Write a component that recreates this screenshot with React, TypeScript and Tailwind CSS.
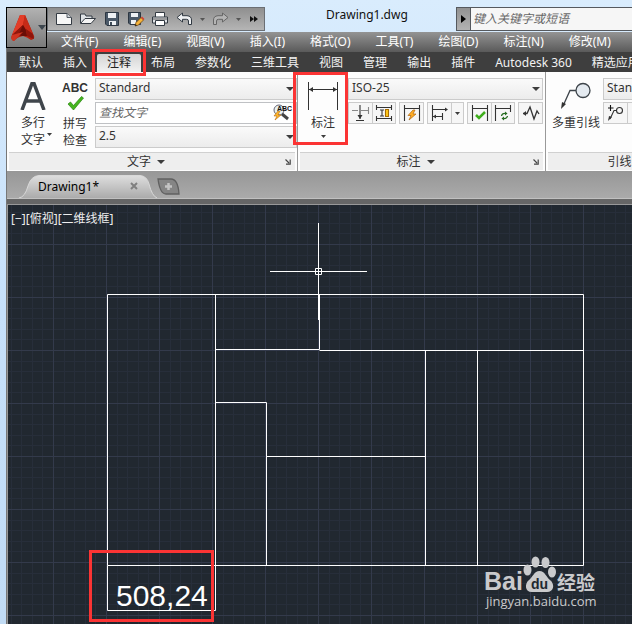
import React from "react";
import type { ReactNode } from "react";

const MENUS = ["文件(F)", "编辑(E)", "视图(V)", "插入(I)", "格式(O)", "工具(T)", "绘图(D)", "标注(N)", "修改(M)"];

const TABS = ["默认", "插入", "注释", "布局", "参数化", "三维工具", "视图", "管理", "输出", "插件", "Autodesk 360", "精选应用"];

function Caret({ className = "" }: { className?: string }) {
  return (
    <svg className={className} width="8" height="4" viewBox="0 0 8 4" aria-hidden="true">
      <path d="M0 0H8L4 4Z" fill="#3c3c3c" />
    </svg>
  );
}

function SmallCaret({ fill = "#3c3c3c" }: { fill?: string }) {
  return (
    <svg width="5" height="3" viewBox="0 0 5 3" aria-hidden="true">
      <path d="M0 0H5L2.5 3Z" fill={fill} />
    </svg>
  );
}

function Launcher() {
  return (
    <button type="button" aria-label="对话框" className="absolute right-1 top-1.5">
      <svg width="6" height="6" viewBox="0 0 6 6" aria-hidden="true">
        <path d="M0.5 0.5L4 4M5.2 0.5V5.2H1" fill="none" stroke="#444" strokeWidth="1.2" />
      </svg>
    </button>
  );
}

function Combo({ label, value, className = "" }: { label: string; value: string; className?: string }) {
  return (
    <div className={`relative h-[22px] ${className}`}>
      <select
        aria-label={label}
        className="block h-full w-full appearance-none border border-[#cbcbcb] bg-linear-to-b from-[#fafafa] to-[#ececec] pb-0.5 pl-[3px] pr-4 text-xs text-[#333]"
      >
        <option>{value}</option>
      </select>
      <Caret className="pointer-events-none absolute right-[3px] top-[9px]" />
    </div>
  );
}

function Panel({ title, width, children, plain }: { title: string; width: string; children: ReactNode; plain?: boolean }) {
  return (
    <section className={`flex shrink-0 flex-col border-r border-[#999] bg-[#fdfdfd] ${width}`}>
      <div className="flex h-20 pt-1.5">{children}</div>
      <div className={`relative mx-0.5 mb-px flex h-[18px] items-center justify-center gap-1.5 border-t border-[#d0d0d0] bg-[#eeeeee] text-xs text-[#333] ${plain ? "" : "pr-3"}`}>
        {title}
        {!plain && <Caret />}
        {!plain && <Launcher />}
      </div>
    </section>
  );
}

function ToolButton({ label, children, width = "w-[23px]" }: { label: string; children: ReactNode; width?: string }) {
  return (
    <button
      type="button"
      aria-label={label}
      className={`flex h-[22px] items-center justify-center border-l border-[#cbcbcb] first:border-l-0 ${width}`}
    >
      {children}
    </button>
  );
}

function ToolGroup({ children }: { children: ReactNode }) {
  return <div className="flex h-[22px] items-center overflow-hidden border border-[#cbcbcb] bg-[#f6f6f6]">{children}</div>;
}

function ToolIcon({ children }: { children: ReactNode }) {
  return (
    <svg width="18" height="16" viewBox="0 0 18 16" fill="none" stroke="#333" strokeWidth="1.1" aria-hidden="true">
      {children}
    </svg>
  );
}

function QuickAccess() {
  const button = "flex h-5 w-6 items-center justify-center";
  return (
    <div className="flex h-6 w-[218px] shrink-0 items-center border border-[#6b6f74] bg-linear-to-b from-[#8f8f8f] to-[#b5b5b5] pl-1">
      <button type="button" aria-label="新建" className={button}>
        <svg width="18" height="14" viewBox="0 0 18 14">
          <path d="M1.5 1.5H12L16.5 5.5V12.5H1.5Z" fill="#f7f7f7" stroke="#333a42" />
          <path d="M12 1.5V5.5H16.5" fill="#d0d4d8" stroke="#555d66" />
        </svg>
      </button>
      <button type="button" aria-label="打开" className={button}>
        <svg width="18" height="14" viewBox="0 0 18 14">
          <path d="M1.5 11V2H6L7 4H13V6.5" fill="#dfe3e6" stroke="#333a42" />
          <path d="M1.5 11.5L6 6.5H16.5L12 11.5Z" fill="#f4f4f4" stroke="#333a42" />
        </svg>
      </button>
      <button type="button" aria-label="保存" className={button}>
        <svg width="16" height="16" viewBox="0 0 16 16">
          <path d="M1.5 1.5H14.5V14.5H3L1.5 13Z" fill="#4b5968" stroke="#2d3742" />
          <path d="M4 2H12V7H4ZM5 10H12V14H5Z" fill="#eef1f4" />
          <path d="M6 11H8V14H6Z" fill="#3d4a57" />
        </svg>
      </button>
      <button type="button" aria-label="另存为" className={button}>
        <svg width="18" height="16" viewBox="0 0 18 16">
          <path d="M1.5 1.5H13.5V13.5H3L1.5 12Z" fill="#4b5968" stroke="#2d3742" />
          <path d="M4 2H11V6H4ZM4 9H9V13H4Z" fill="#eef1f4" />
          <path d="M8 15L9 11.5L14 6.5L16.5 9L11.5 14Z" fill="#f6b33a" stroke="#704713" strokeWidth="0.8" />
          <path d="M14 6.5L16.5 9L17.5 8L15 5.5Z" fill="#d83c31" />
          <path d="M8 15L8.6 13L10 14.4Z" fill="#222" />
        </svg>
      </button>
      <button type="button" aria-label="打印" className={button}>
        <svg width="18" height="16" viewBox="0 0 18 16">
          <path d="M4.5 6V1.5H13.5V6" fill="#fff" stroke="#333a42" />
          <path d="M1.5 6H16.5V12H1.5Z" fill="#e2e4e7" stroke="#333a42" />
          <path d="M4.5 9.5H13.5V14.5H4.5Z" fill="#fff" stroke="#333a42" />
          <path d="M2 8H16" stroke="#555" />
        </svg>
      </button>
      <button type="button" aria-label="放弃" className={button}>
        <svg width="17" height="14" viewBox="0 0 17 14">
          <path d="M1 5.5L6.5 1V3.7H11Q15.5 4 15.5 8V12.5H12.5V9Q12.5 7.3 10.5 7.3H6.5V10Z" fill="#eef0f2" stroke="#303942" />
        </svg>
      </button>
      <button type="button" aria-label="放弃列表" className="flex h-5 w-3 items-center justify-center">
        <SmallCaret fill="#555" />
      </button>
      <button type="button" aria-label="重做" className={button}>
        <svg width="17" height="14" viewBox="0 0 17 14">
          <path d="M16 5.5L10.5 1V3.7H6Q1.5 4 1.5 8V12.5H4.5V9Q4.5 7.3 6.5 7.3H10.5V10Z" fill="#b4b4b4" stroke="#666" />
        </svg>
      </button>
      <button type="button" aria-label="重做列表" className="flex h-5 w-3 items-center justify-center">
        <SmallCaret fill="#555" />
      </button>
      <button type="button" aria-label="更多" className="flex h-5 flex-1 items-center justify-center">
        <svg width="8" height="6" viewBox="0 0 8 6">
          <path d="M0 0L4 3L0 6ZM4 0L8 3L4 6Z" fill="#111" />
        </svg>
      </button>
    </div>
  );
}

function AppButton() {
  return (
    <button
      type="button"
      aria-label="应用程序菜单"
      className="absolute left-0 top-[7px] z-10 flex h-[41px] w-[41px] items-center gap-[3px] border border-black bg-linear-to-b from-[#b2b2b2] to-[#7b7b7b] pl-1"
    >
      <svg width="24" height="26" viewBox="0 0 24 26">
        <path d="M9 0H14L23 21Q24 24 20 25Q16 22 12 21Q6 22 3 26Q-1 25 1 20Z" fill="#b3200f" />
        <path d="M9 0H14L12 10L1 20Z" fill="#e23d28" />
        <path d="M14 0L22 19L15 15L12 10Z" fill="#c62a18" />
        <path d="M12 10L15 15L16 21L12 21L3 20Z" fill="#6a0d07" />
        <path d="M12 10L8 19L1 20Z" fill="#8f170d" />
        <path d="M1 20L12 17L3 26Q-1 25 1 20Z" fill="#d03420" />
        <path d="M15 14L22 19L23 24L16 21Z" fill="#8d150b" />
      </svg>
      <svg width="8" height="5" viewBox="0 0 8 5">
        <path d="M0 0H8L4 5Z" fill="#3d464e" />
      </svg>
    </button>
  );
}

function TitleBar() {
  return (
    <header className="flex h-8 items-start pl-[41px] pt-[7px]">
      <QuickAccess />
      <h1 className="w-[191px] shrink-0 pl-[61px] text-xs text-[#111]">Drawing1.dwg</h1>
      <div className="flex h-6 min-w-0 flex-1 border border-r-0 border-[#55595e]">
        <button type="button" aria-label="搜索选项" className="flex w-[14px] items-center justify-center border-r border-[#55595e] bg-linear-to-b from-[#929292] to-[#b3b3b3]">
          <svg width="5" height="8" viewBox="0 0 5 8">
            <path d="M0 0L5 4L0 8Z" fill="#000" />
          </svg>
        </button>
        <input
          aria-label="搜索"
          placeholder="键入关键字或短语"
          className="min-w-0 flex-1 bg-[#f6f6f6] pl-0.5 text-xs italic text-[#333] placeholder:text-[#666]"
        />
      </div>
    </header>
  );
}

function TextPanel() {
  return (
    <Panel title="文字" width="w-[291px]">
      <button type="button" className="relative ml-2 flex w-9 flex-col items-center text-xs leading-[17px] text-[#333]">
        <svg className="mb-1 mt-1" width="26" height="28" viewBox="0 0 26 28" aria-hidden="true">
          <path d="M2 28L12 1.500H14L24 28M6 19H20" fill="none" stroke="#3f454b" strokeWidth="3.5" />
        </svg>
        <span>多行</span>
        <span>文字</span>
        <span className="absolute -right-px bottom-4"><SmallCaret /></span>
      </button>
      <button type="button" className="ml-2 flex w-8 flex-col items-center text-xs leading-[17px] text-[#333]">
        <span className="mt-0.5 font-['Liberation_Sans'] text-xs font-bold leading-4">ABC</span>
        <svg className="mb-1" width="17" height="15" viewBox="0 0 17 15" aria-hidden="true">
          <path d="M1 8L3.5 6L6.5 9.5L14.5 0.5L16.5 2L6.5 14Z" fill="#45b51e" stroke="#27820e" strokeWidth="0.7" />
        </svg>
        <span>拼写</span>
        <span>检查</span>
      </button>
      <div className="ml-1 flex flex-1 flex-col gap-0.5">
        <Combo label="文字样式" value="Standard" />
        <div className="relative h-[22px]">
          <input
            aria-label="查找文字"
            placeholder="查找文字"
            className="block h-full w-full border border-[#bfc1c4] bg-white pb-0.5 pl-[3px] text-xs italic placeholder:text-[#666]"
          />
          <svg className="absolute right-1 top-0.5" width="20" height="17" viewBox="0 0 20 17" aria-hidden="true">
            <circle cx="6" cy="6" r="5" fill="#e9f2f2" stroke="#667" />
            <path d="M9 10L15 15" stroke="#444" strokeWidth="3" />
            <path d="M5 7L1 12H4L2 16L8 11H5L7 7Z" fill="#ffb72d" stroke="#b96b0b" strokeWidth="0.6" />
            <text x="4" y="7" fontFamily="Liberation Sans" fontWeight="bold" fontSize="7" fill="#111">ABC</text>
          </svg>
        </div>
        <Combo label="文字高度" value="2.5" />
      </div>
    </Panel>
  );
}

function DimensionPanel() {
  return (
    <Panel title="标注" width="w-[248px]">
      <div className="relative flex w-[50px] justify-center">
        <button type="button" className="flex w-11 flex-col items-center text-xs leading-[17px] text-[#333]">
          <svg className="mb-1 mt-1" width="32" height="28" viewBox="0 0 32 28" fill="none" stroke="#333" aria-hidden="true">
            <path d="M1.500 0V28M30.500 0V28" />
            <path d="M2 7.500H30" />
            <path d="M2 7.500L6 5V10ZM30 7.500L26 5V10Z" fill="#333" stroke="none" />
          </svg>
          <span>标注</span>
          <span className="mt-1"><SmallCaret /></span>
        </button>
        <span className="pointer-events-none absolute -left-[5px] -top-1.5 z-10 h-[73px] w-[55px] border-3 border-[#fb3434]" />
      </div>
      <div className="flex min-w-0 flex-1 flex-col gap-0.5 pr-0.5">
        <Combo label="标注样式" value="ISO-25" />
        <div className="flex justify-between">
          <ToolGroup>
            <ToolButton label="折断标注">
              <ToolIcon>
                <path d="M0 5.5H6M9 5.5H16M16.5 2V9" stroke="#888" />
                <path d="M8 0V14M4 15.5H12" />
                <path d="M5.5 10H10.5L8 14Z" fill="#333" stroke="none" />
              </ToolIcon>
            </ToolButton>
            <ToolButton label="调整间距">
              <ToolIcon>
                <path d="M1.5 0V5M16.5 0V5M1.5 11V16M16.5 11V16M1 2.5H17M1 13.5H17M5 5H9M7 5V11M5 11H9" />
                <path d="M10.5 4.5H13.5V11.5H10.5Z" fill="#ffc91b" stroke="#a66b00" />
              </ToolIcon>
            </ToolButton>
          </ToolGroup>
          <ToolGroup>
            <ToolButton label="快速标注">
              <ToolIcon>
                <path d="M1.5 0V16M16.5 0V16M2 3.5H16" />
                <path d="M10 5L5 10.5H8L6 15L13 9H10L12 5Z" fill="#ffad24" stroke="#ad6410" strokeWidth="0.7" />
              </ToolIcon>
            </ToolButton>
          </ToolGroup>
          <ToolGroup>
            <ToolButton label="连续标注">
              <ToolIcon>
                <path d="M1.5 0V16M2 4.5H15M2 11.5H11M11.5 8V15" />
                <path d="M17 4.5L14 2.500V6.500ZM2 11.5L5 9.500V13.500Z" fill="#333" stroke="none" />
              </ToolIcon>
            </ToolButton>
            <ToolButton label="标注列表" width="w-3">
              <SmallCaret />
            </ToolButton>
          </ToolGroup>
          <ToolGroup>
            <ToolButton label="检验">
              <ToolIcon>
                <path d="M1.5 0V16M16.5 0V16M2 3.5H16" />
                <path d="M5 10L8 13L14 7" stroke="#3fae1c" strokeWidth="2.5" />
              </ToolIcon>
            </ToolButton>
            <ToolButton label="更新">
              <ToolIcon>
                <path d="M1.5 0V16M16.5 0V7M2 3.5H16" />
                <path d="M7.5 11Q8 8 12 8.5M13.5 11Q13 14 9 13.5" stroke="#256b1f" strokeWidth="1.2" />
                <path d="M11 6.500L13.500 8.5L11 10.500ZM10 11.500L7.500 13.5L10 15.500Z" fill="#256b1f" stroke="none" />
              </ToolIcon>
            </ToolButton>
          </ToolGroup>
          <ToolGroup>
            <ToolButton label="折弯线性">
              <ToolIcon>
                <path d="M1 8.5H5L8 2L12 14L15 6L17 9" strokeWidth="1.3" />
                <path d="M1 8.5L4 6V11Z" fill="#333" stroke="none" />
              </ToolIcon>
            </ToolButton>
          </ToolGroup>
        </div>
      </div>
    </Panel>
  );
}

function LeaderPanel() {
  return (
    <Panel title="引线" width="w-[148px]" plain>
      <button type="button" className="ml-1 flex w-[52px] flex-col items-center text-xs leading-[17px] text-[#333]">
        <svg className="mb-1 mt-1" width="32" height="28" viewBox="0 0 32 28" fill="none" stroke="#3d444a" aria-hidden="true">
          <circle cx="23" cy="8.5" r="7" fill="#e4eaf0" strokeWidth="1.3" />
          <path d="M16 8.5H10L3 24" strokeWidth="1.3" />
          <path d="M1 27L2 20L6 22Z" fill="#333" stroke="none" />
        </svg>
        <span className="whitespace-nowrap">多重引线</span>
      </button>
      <div className="ml-px flex min-w-0 flex-1 flex-col gap-0.5">
        <Combo label="多重引线样式" value="Standard" />
        <div className="flex">
          <ToolGroup>
            <ToolButton label="添加引线">
              <ToolIcon>
                <path d="M3.5 0V6M1 3H6.5" stroke="#111" />
                <circle cx="12.5" cy="5.5" r="3" />
                <path d="M9.5 5.5H7L3 14" />
                <path d="M1 16L2 11L5 12Z" fill="#333" stroke="none" />
              </ToolIcon>
            </ToolButton>
            <ToolButton label="删除引线">
              <ToolIcon>
                <circle cx="12.5" cy="5.5" r="3" />
                <path d="M9.5 5.5H7L3 14" />
              </ToolIcon>
            </ToolButton>
          </ToolGroup>
        </div>
      </div>
    </Panel>
  );
}

function DocumentTabs() {
  return (
    <div className="flex h-[27px] items-end bg-linear-to-b from-[#979797] to-[#aaaaaa] pl-3">
      <div className="relative flex h-[23px] w-[138px] shrink-0 items-center">
        <svg className="absolute inset-0" width="138" height="23" viewBox="0 0 138 23" aria-hidden="true">
          <defs>
            <linearGradient id="docTab" x2="0" y2="1">
              <stop offset="0" stopColor="#dedede" />
              <stop offset="1" stopColor="#ababab" />
            </linearGradient>
          </defs>
          <path d="M0 23Q6 22 9 11Q12 1 20 .5H121Q128 1 130 9Q133 21 138 23" fill="url(#docTab)" stroke="#d8d8d8" />
        </svg>
        <a href="#model" className="relative ml-[19px] text-xs text-black">Drawing1*</a>
        <button type="button" aria-label="关闭" className="absolute right-[19px] top-[7px]">
          <svg className="block" width="8" height="8" viewBox="0 0 8 8">
            <path d="M1 1L7 7M7 1L1 7" stroke="#808080" strokeWidth="2" />
          </svg>
        </button>
      </div>
      <button type="button" aria-label="新图形" className="mb-[3px]">
        <svg className="block" width="23" height="17" viewBox="0 0 23 17">
          <path d="M1 1H14Q21 1 22 16H9Q3 16 1 1Z" fill="#858585" stroke="#606060" strokeWidth="1.3" />
          <path d="M11.5 5V12M8 8.5H15" stroke="#c4c4c4" strokeWidth="2.5" />
        </svg>
      </button>
    </div>
  );
}

function DrawingArea() {
  return (
    <main className="relative grid flex-1 bg-[#212830]">
      <svg className="h-full min-h-[419px] w-full" role="img" aria-label="平面图">
        <defs>
          <pattern id="grid" x="45" y="39" width="53" height="53" patternUnits="userSpaceOnUse">
            <path d="M11.5 0V53M21.5 0V53M32.5 0V53M42.5 0V53M0 11.5H53M0 21.5H53M0 32.5H53M0 42.5H53" stroke="#272e3a" />
            <path d="M.5 0V53M0 .5H53" stroke="#333a4b" />
          </pattern>
        </defs>
        <rect width="100%" height="100%" fill="url(#grid)" />
        <g fill="none" stroke="#fff">
          <path d="M99.5 89.5H575.5V360.5H99.5ZM99.5 360.5V405.5H207.5V89.5" />
          <path d="M207.5 144.5H311.5V89.5M311.5 145.5H575.5M207.5 197.5H258.5V360.5M258.5 251.5H417.5M417.5 145.5V360.5M469.5 145.5V360.5" />
          <path d="M262 66.5H359M310.5 18V115M307.5 63.5H313.5V69.5H307.5Z" />
        </g>
        <text x="108" y="401" fontFamily="Liberation Sans, sans-serif" fontSize="30" fill="#fff">508,24</text>
        <rect x="82.5" y="346.5" width="122" height="69" fill="none" stroke="#fb3434" strokeWidth="3" />
        <g fill="#c9cacc">
          <text x="476" y="385" fontFamily="Liberation Sans, sans-serif" fontWeight="bold" fontSize="25">Bai</text>
          <ellipse cx="519.5" cy="365" rx="4" ry="5.5" />
          <ellipse cx="527.5" cy="357" rx="4" ry="5.5" />
          <ellipse cx="537.5" cy="357.5" rx="4" ry="5.5" />
          <ellipse cx="544" cy="367" rx="4" ry="5.5" />
          <path d="M531.5 366C537 366 538 372 542 375C548 380 545 388 538 387H525C517 388 516 379 521 375C525 372 526 366 531.5 366Z" />
          <text x="523" y="384" fontFamily="Liberation Sans, sans-serif" fontWeight="bold" fontSize="14" fill="#212830">du</text>
          <text x="549" y="385" fontFamily="Noto Sans CJK SC, sans-serif" fontWeight="bold" fontSize="19">经验</text>
          <text x="478" y="401" fontFamily="Open Sans, sans-serif" fontWeight="500" fontSize="13">jingyan.baidu.com</text>
        </g>
      </svg>
      <p className="absolute left-[3px] top-1.5 text-xs leading-4 text-[#eee]">[−][俯视][二维线框]</p>
    </main>
  );
}

export default function App() {
  return (
    <div className="flex min-h-screen flex-col overflow-hidden bg-linear-to-b from-[#d9ecfd] via-[#c6e0fa] to-[#c1dbf4] pl-1.5 font-['Noto_Sans','Noto_Sans_CJK_SC',sans-serif]">
      <div className="relative flex flex-1 flex-col">
        <AppButton />
        <TitleBar />
        <div className="flex flex-1 flex-col border-l border-[#777]">
          <nav aria-label="菜单" className="flex h-5 items-center gap-[25px] overflow-hidden bg-linear-to-b from-[#949494] to-[#5a5a5a] pl-[54px] text-xs text-white">
            {MENUS.map((menu) => (
              <a key={menu} href="#menu" className="shrink-0 whitespace-nowrap">{menu}</a>
            ))}
          </nav>
          <nav aria-label="功能区" className="flex h-5 items-end bg-[#3e3e3e] pl-0.5 text-xs text-[#f2f2f2]">
            {TABS.map((tab) =>
              tab === "注释" ? (
                <a key={tab} href="#ribbon" aria-current="page" className="relative flex h-[18px] shrink-0 items-center rounded-t-xs bg-linear-to-b from-[#d4d4d4] to-[#f2f2f2] px-2.5 text-[#222]">
                  {tab}
                  <span className="pointer-events-none absolute -inset-x-[5px] -bottom-1 -top-[5px] z-10 border-3 border-[#fb3434]" />
                </a>
              ) : (
                <a key={tab} href="#ribbon" className="flex h-[18px] shrink-0 items-center whitespace-nowrap px-2.5">{tab}</a>
              ),
            )}
          </nav>
          <div className="flex h-[99px] bg-[#fdfdfd]">
            <TextPanel />
            <DimensionPanel />
            <LeaderPanel />
          </div>
          <DocumentTabs />
          <div className="h-[7px] border-y border-t-[#c0c0c0] border-b-[#999] bg-[#666]" />
          <div className="flex flex-1 flex-col border-l border-[#999]">
            <DrawingArea />
          </div>
        </div>
      </div>
    </div>
  );
}
